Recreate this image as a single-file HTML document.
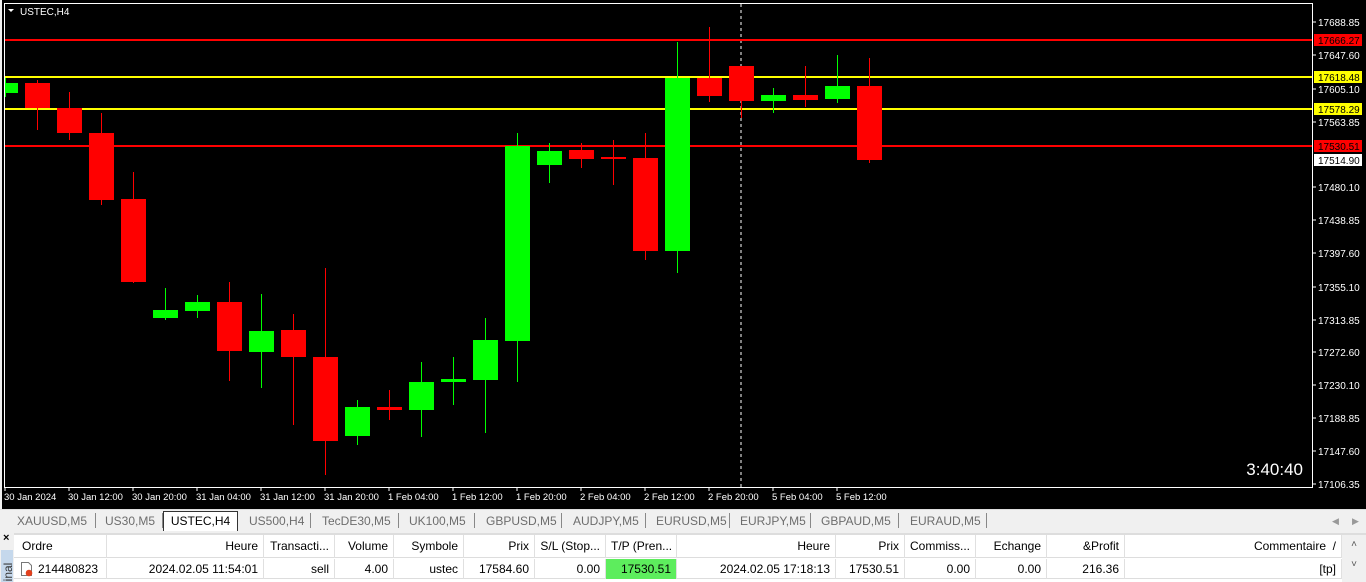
<!DOCTYPE html>
<html><head><meta charset="utf-8"><style>
*{margin:0;padding:0;box-sizing:border-box}
body{width:1366px;height:582px;overflow:hidden;background:#f0f0f0;font-family:"Liberation Sans",sans-serif;position:relative}
#chart{position:absolute;left:2px;top:0;width:1364px;height:509px;background:#000}
.tabs{position:absolute;left:0;top:509px;width:1366px;height:21px;background:#f0f0f0;font-size:12px;color:#6d6d6d;border-top:1px solid #ddd}
.tab{position:absolute;top:3px;height:16px;line-height:16px}
.sep{position:absolute;top:3px;width:1px;height:15px;background:#888}
.act{position:absolute;left:163px;top:1px;width:75px;height:20px;background:#fff;border:1px solid #333;border-bottom:none;color:#000;text-align:center;line-height:19px}
.tbl{position:absolute;left:14px;top:533px;width:1352px;height:49px;background:#fff;font-size:12px;color:#000}
.c{position:absolute;height:23px;line-height:23px;border-right:1px solid #e0e0e0;padding:0 5px;white-space:nowrap;overflow:hidden}
.r{text-align:right}
</style></head><body>
<div id="chart">
<svg width="1364" height="509" style="position:absolute;left:-2px;top:0" font-family="Liberation Sans,sans-serif">
<rect x="4.5" y="3.5" width="1308" height="484" fill="none" stroke="#fff"/>
<line x1="741" y1="4" x2="741" y2="487" stroke="#fff" stroke-dasharray="3,3"/>
<g stroke-width="2"><line x1="5" y1="40" x2="1312" y2="40" stroke="#f00"/><line x1="5" y1="77" x2="1312" y2="77" stroke="#ff0"/><line x1="5" y1="109" x2="1312" y2="109" stroke="#ff0"/><line x1="5" y1="146" x2="1312" y2="146" stroke="#f00"/></g>
<g fill="#fff" font-size="10">
<text x="20" y="15" font-size="10">USTEC,H4</text>
<path d="M8 9h6l-3 3z" fill="#fff"/>
</g>
<g fill="#fff" font-size="10" text-anchor="start">
<text x="1318" y="26">17688.85</text><text x="1318" y="59">17647.60</text><text x="1318" y="93">17605.10</text><text x="1318" y="126">17563.85</text><text x="1318" y="191">17480.10</text><text x="1318" y="224">17438.85</text><text x="1318" y="257">17397.60</text><text x="1318" y="291">17355.10</text><text x="1318" y="324">17313.85</text><text x="1318" y="356">17272.60</text><text x="1318" y="389">17230.10</text><text x="1318" y="422">17188.85</text><text x="1318" y="455">17147.60</text><text x="1318" y="488">17106.35</text>
</g>
<g stroke="#fff"><path d="M1312 22h4M1312 55h4M1312 89h4M1312 122h4M1312 187h4M1312 220h4M1312 253h4M1312 287h4M1312 320h4M1312 352h4M1312 385h4M1312 418h4M1312 451h4M1312 484h4"/></g>
<rect x="1314" y="34" width="48" height="12" fill="#f00"/><text x="1318" y="44" font-size="10" fill="#000">17666.27</text>
<rect x="1314" y="71" width="48" height="12" fill="#ff0"/><text x="1318" y="81" font-size="10" fill="#000">17618.48</text>
<rect x="1314" y="103" width="48" height="12" fill="#ff0"/><text x="1318" y="113" font-size="10" fill="#000">17578.29</text>
<rect x="1314" y="140" width="48" height="12" fill="#f00"/><text x="1318" y="150" font-size="10" fill="#000">17530.51</text>
<rect x="1314" y="154" width="48" height="12" fill="#fff"/><text x="1318" y="164" font-size="10" fill="#000">17514.90</text>
<text x="1303" y="475" font-size="17" fill="#fff" text-anchor="end">3:40:40</text>
<g fill="#fff" font-size="9.5">
<text x="4" y="500">30 Jan 2024</text><text x="68" y="500">30 Jan 12:00</text><text x="132" y="500">30 Jan 20:00</text><text x="196" y="500">31 Jan 04:00</text><text x="260" y="500">31 Jan 12:00</text><text x="324" y="500">31 Jan 20:00</text><text x="388" y="500">1 Feb 04:00</text><text x="452" y="500">1 Feb 12:00</text><text x="516" y="500">1 Feb 20:00</text><text x="580" y="500">2 Feb 04:00</text><text x="644" y="500">2 Feb 12:00</text><text x="708" y="500">2 Feb 20:00</text><text x="772" y="500">5 Feb 04:00</text><text x="836" y="500">5 Feb 12:00</text>
</g>
<g stroke="#fff"><path d="M5 488v3M69 488v3M133 488v3M197 488v3M261 488v3M325 488v3M389 488v3M453 488v3M517 488v3M581 488v3M645 488v3M709 488v3M773 488v3M837 488v3"/></g>
<g>
<line x1="5.5" y1="78" x2="5.5" y2="97" stroke="#0f0"/><rect x="5" y="83" width="13" height="10" fill="#0f0"/>
<line x1="37.5" y1="80" x2="37.5" y2="130" stroke="#f00"/><rect x="25" y="83" width="25" height="25" fill="#f00"/>
<line x1="69.5" y1="92" x2="69.5" y2="140" stroke="#f00"/><rect x="57" y="108" width="25" height="25" fill="#f00"/>
<line x1="101.5" y1="113" x2="101.5" y2="205" stroke="#f00"/><rect x="89" y="133" width="25" height="67" fill="#f00"/>
<line x1="133.5" y1="172" x2="133.5" y2="283" stroke="#f00"/><rect x="121" y="199" width="25" height="83" fill="#f00"/>
<line x1="165.5" y1="288" x2="165.5" y2="320" stroke="#0f0"/><rect x="153" y="310" width="25" height="8" fill="#0f0"/>
<line x1="197.5" y1="295" x2="197.5" y2="318" stroke="#0f0"/><rect x="185" y="302" width="25" height="9" fill="#0f0"/>
<line x1="229.5" y1="282" x2="229.5" y2="381" stroke="#f00"/><rect x="217" y="302" width="25" height="49" fill="#f00"/>
<line x1="261.5" y1="294" x2="261.5" y2="388" stroke="#0f0"/><rect x="249" y="331" width="25" height="21" fill="#0f0"/>
<line x1="293.5" y1="314" x2="293.5" y2="425" stroke="#f00"/><rect x="281" y="330" width="25" height="27" fill="#f00"/>
<line x1="325.5" y1="268" x2="325.5" y2="475" stroke="#f00"/><rect x="313" y="357" width="25" height="84" fill="#f00"/>
<line x1="357.5" y1="400" x2="357.5" y2="445" stroke="#0f0"/><rect x="345" y="407" width="25" height="29" fill="#0f0"/>
<line x1="389.5" y1="390" x2="389.5" y2="420" stroke="#f00"/><rect x="377" y="407" width="25" height="3" fill="#f00"/>
<line x1="421.5" y1="362" x2="421.5" y2="437" stroke="#0f0"/><rect x="409" y="382" width="25" height="28" fill="#0f0"/>
<line x1="453.5" y1="357" x2="453.5" y2="405" stroke="#0f0"/><rect x="441" y="379" width="25" height="3" fill="#0f0"/>
<line x1="485.5" y1="318" x2="485.5" y2="433" stroke="#0f0"/><rect x="473" y="340" width="25" height="40" fill="#0f0"/>
<line x1="517.5" y1="133" x2="517.5" y2="382" stroke="#0f0"/><rect x="505" y="146" width="25" height="195" fill="#0f0"/>
<line x1="549.5" y1="143" x2="549.5" y2="183" stroke="#0f0"/><rect x="537" y="151" width="25" height="14" fill="#0f0"/>
<line x1="581.5" y1="143" x2="581.5" y2="168" stroke="#f00"/><rect x="569" y="150" width="25" height="9" fill="#f00"/>
<line x1="613.5" y1="140" x2="613.5" y2="185" stroke="#f00"/><rect x="601" y="157" width="25" height="2" fill="#f00"/>
<line x1="645.5" y1="133" x2="645.5" y2="260" stroke="#f00"/><rect x="633" y="158" width="25" height="93" fill="#f00"/>
<line x1="677.5" y1="42" x2="677.5" y2="273" stroke="#0f0"/><rect x="665" y="78" width="25" height="173" fill="#0f0"/>
<line x1="709.5" y1="27" x2="709.5" y2="102" stroke="#f00"/><rect x="697" y="78" width="25" height="18" fill="#f00"/>
<line x1="741.5" y1="66" x2="741.5" y2="118" stroke="#f00"/><rect x="729" y="66" width="25" height="35" fill="#f00"/>
<line x1="773.5" y1="88" x2="773.5" y2="113" stroke="#0f0"/><rect x="761" y="95" width="25" height="6" fill="#0f0"/>
<line x1="805.5" y1="66" x2="805.5" y2="107" stroke="#f00"/><rect x="793" y="95" width="25" height="5" fill="#f00"/>
<line x1="837.5" y1="55" x2="837.5" y2="103" stroke="#0f0"/><rect x="825" y="86" width="25" height="13" fill="#0f0"/>
<line x1="869.5" y1="58" x2="869.5" y2="163" stroke="#f00"/><rect x="857" y="86" width="25" height="74" fill="#f00"/>
</g>
</svg>
</div>
<div class="tabs">
<span class="tab" style="left:17px">XAUUSD,M5</span><span class="sep" style="left:95px"></span>
<span class="tab" style="left:105px">US30,M5</span><span class="sep" style="left:162px"></span>
<div class="act">USTEC,H4</div>
<span class="tab" style="left:249px">US500,H4</span><span class="sep" style="left:310px"></span>
<span class="tab" style="left:322px">TecDE30,M5</span><span class="sep" style="left:398px"></span>
<span class="tab" style="left:409px">UK100,M5</span><span class="sep" style="left:474px"></span>
<span class="tab" style="left:486px">GBPUSD,M5</span><span class="sep" style="left:561px"></span>
<span class="tab" style="left:573px">AUDJPY,M5</span><span class="sep" style="left:645px"></span>
<span class="tab" style="left:656px">EURUSD,M5</span><span class="sep" style="left:729px"></span>
<span class="tab" style="left:740px">EURJPY,M5</span><span class="sep" style="left:810px"></span>
<span class="tab" style="left:821px">GBPAUD,M5</span><span class="sep" style="left:898px"></span>
<span class="tab" style="left:910px">EURAUD,M5</span><span class="sep" style="left:986px"></span>
<span class="tab" style="left:1332px;font-size:9px;color:#999">◀</span><span class="tab" style="left:1352px;font-size:9px;color:#999">▶</span>
</div>
<div style="position:absolute;left:0;top:530px;width:14px;height:52px;background:#f0f0f0">
<div style="position:absolute;left:3px;top:2px;font-size:11px;font-weight:bold">×</div>
<div style="position:absolute;left:1px;top:20px;width:12px;height:32px;background:#c5d8ec;overflow:hidden"><div style="transform:rotate(-90deg);transform-origin:0 0;position:absolute;left:0;top:58px;font-size:12px;color:#333;white-space:nowrap">Terminal</div></div>
</div>
<div class="tbl">
<div style="position:absolute;left:0;top:0;width:1352px;height:2px;background:#ddd"></div>
<div style="position:absolute;left:0;top:2px;width:1352px;height:23px;border-bottom:1px solid #ddd">
<div class="c" style="left:0;width:93px;padding-left:8px">Ordre</div>
<div class="c r" style="left:93px;width:157px">Heure</div>
<div class="c r" style="left:250px;width:71px">Transacti...</div>
<div class="c r" style="left:321px;width:59px">Volume</div>
<div class="c r" style="left:380px;width:70px">Symbole</div>
<div class="c r" style="left:450px;width:71px">Prix</div>
<div class="c r" style="left:521px;width:71px">S/L (Stop...</div>
<div class="c r" style="left:592px;width:71px">T/P (Pren...</div>
<div class="c r" style="left:663px;width:159px">Heure</div>
<div class="c r" style="left:822px;width:69px">Prix</div>
<div class="c r" style="left:891px;width:71px">Commiss...</div>
<div class="c r" style="left:962px;width:71px">Echange</div>
<div class="c r" style="left:1033px;width:78px">&amp;Profit</div>
<div class="c r" style="left:1111px;width:217px">Commentaire &nbsp;/</div>
</div>
<div style="position:absolute;left:0;top:26px;width:1328px;height:20px;border-bottom:1px solid #ddd">
<div class="c" style="left:0;width:93px;height:20px;line-height:20px;padding-left:24px">214480823</div>
<svg style="position:absolute;left:6px;top:3px" width="14" height="15"><path d="M1.5 .5h7l3 3v10h-10z" fill="#fff" stroke="#777"/><circle cx="9" cy="11" r="3.3" fill="#e2401c"/></svg>
<div class="c r" style="left:93px;width:157px;height:20px;line-height:20px">2024.02.05 11:54:01</div>
<div class="c r" style="left:250px;width:71px;height:20px;line-height:20px">sell</div>
<div class="c r" style="left:321px;width:59px;height:20px;line-height:20px">4.00</div>
<div class="c r" style="left:380px;width:70px;height:20px;line-height:20px">ustec</div>
<div class="c r" style="left:450px;width:71px;height:20px;line-height:20px">17584.60</div>
<div class="c r" style="left:521px;width:71px;height:20px;line-height:20px">0.00</div>
<div class="c r" style="left:592px;width:71px;height:20px;line-height:20px;background:#5ded5d">17530.51</div>
<div class="c r" style="left:663px;width:159px;height:20px;line-height:20px">2024.02.05 17:18:13</div>
<div class="c r" style="left:822px;width:69px;height:20px;line-height:20px">17530.51</div>
<div class="c r" style="left:891px;width:71px;height:20px;line-height:20px">0.00</div>
<div class="c r" style="left:962px;width:71px;height:20px;line-height:20px">0.00</div>
<div class="c r" style="left:1033px;width:78px;height:20px;line-height:20px">216.36</div>
<div class="c r" style="left:1111px;width:217px;height:20px;line-height:20px">[tp]</div>
</div>
<div style="position:absolute;left:1328px;top:2px;width:24px;height:47px;background:#f0f0f0;font-size:10px;color:#555;text-align:center;line-height:20px">˄<br>˅</div>
</div>
</body></html>
